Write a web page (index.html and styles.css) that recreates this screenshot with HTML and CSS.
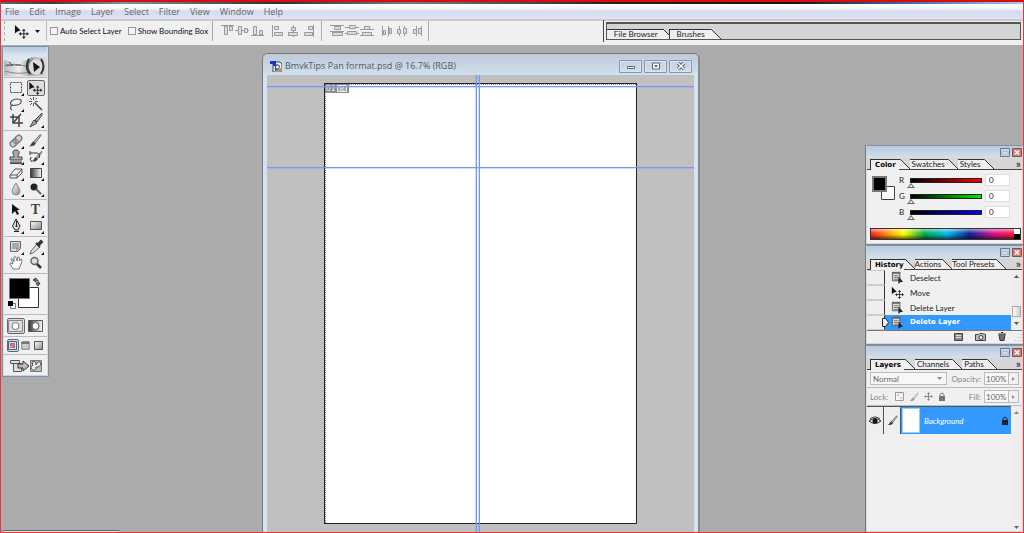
FILE: index.html
```html
<!DOCTYPE html>
<html lang="en">
<head>
<meta charset="utf-8">
<title>BmvkTips Pan format.psd</title>
<link rel="stylesheet" href="styles.css">
</head>
<body>
<svg class="sprite" aria-hidden="true">
  <defs>
    <linearGradient id="gray" x1="0" x2="1"><stop offset="0" stop-color="#333"/><stop offset="1" stop-color="#fff"/></linearGradient>
    <linearGradient id="soft" x1="0" y1="0" x2="1" y2="1"><stop offset="0" stop-color="#fff"/><stop offset="1" stop-color="#888"/></linearGradient>
    <symbol id="corner" viewBox="0 0 16 16"><path d="M16 13v3h-3z" fill="#111"/></symbol>
    <symbol id="move" viewBox="0 0 16 16"><path d="M1 1v9l2.500-2 3.500-1z" fill="#111"/><path d="M10.500 6.500v8M6.500 10.500h8" stroke="#222"/><path d="M10.500 5l2 2.500h-4zM10.500 16l2-2.500h-4zM5 10.500l2.500-2v4zM16 10.500l-2.500-2v4z" fill="#222"/></symbol>
    <symbol id="step" viewBox="0 0 14 14"><path d="M1.500 1.500h8v9h-8z" fill="#ddd" stroke="#555"/><path d="M1 1h9v2H1z" fill="#666"/><path d="M3 5h5M3 7h5M3 9h5" stroke="#777"/><path d="M8 6v8l2-2 3-.5z" fill="#222"/></symbol>
    <symbol id="brush" viewBox="0 0 16 16"><path d="M14 1L6 10l2 1.500L15 2z" fill="#bbb" stroke="#444" stroke-width=".8"/><path d="M6 9l3 2.500C7 15 4 14.500 1 14.500 4 13 4 10 6 9z" fill="#444"/></symbol>
    <symbol id="chip" viewBox="0 0 12 12"><path d="M1 1h10v10H1z" fill="#ccc" stroke="#666"/><path d="M1 1h10v3H1z" fill="#777"/></symbol>
    <symbol id="min" viewBox="0 0 10 9"><path d="M.5.5h9v8h-9z" fill="#c7d6e6" stroke="#67788d"/><path d="M2 4h6v2H2z" fill="#fff" stroke="#67788d" stroke-width=".5"/></symbol>
    <symbol id="cls" viewBox="0 0 10 9"><path d="M.5.5h9v8h-9z" fill="#cf8078" stroke="#874c4c"/><path d="M3 2.500l4 4M7 2.500l-4 4" stroke="#fff" stroke-width="1.500"/></symbol>
    <symbol id="lock" viewBox="0 0 8 9"><path d="M2 4V2.500q2-3 4 0V4" fill="none" stroke="currentColor"/><path d="M1 4h6v5H1z" fill="currentColor"/></symbol>
    <symbol id="slant" viewBox="0 0 11 10"><path d="M0 0h1l10 10H0z" fill="#efefef"/><path d="M0 .5h1.500L11 10" fill="none" stroke="#333"/></symbol>
  </defs>
</svg>
<div class="app">
  <div class="strip"></div>
  <nav class="menubar">
    <button>File</button><button>Edit</button><button>Image</button><button>Layer</button><button>Select</button><button>Filter</button><button>View</button><button>Window</button><button>Help</button>
  </nav>
  <header class="options">
    <span class="grip"></span>
    <button class="current-tool" aria-label="Move tool"><svg width="15" height="15"><use href="#move"/></svg><svg width="5" height="3" viewBox="0 0 5 3"><path d="M0 0h5L2.500 3z" fill="#111"/></svg></button>
    <div class="checks">
      <label><input type="checkbox">Auto Select Layer</label>
      <label><input type="checkbox">Show Bounding Box</label>
    </div>
    <div class="aligns">
      <button aria-label="Align vertical"><svg width="43" height="12" viewBox="0 0 43 12"><g fill="#ddd" stroke="#9a9a9a"><path d="M0 .5h13M14 5.500h14M30 10.500h13"/><path d="M3.500 1.500h3v8h-3zM8.500 1.500h3v4h-3zM17.500 1.500h3v8h-3zM23.500 3.500h3v4h-3zM32.500 1.500h3v8h-3zM38.500 5.500h3v4h-3z"/></g></svg></button>
      <button aria-label="Align horizontal"><svg width="43" height="12" viewBox="0 0 43 12"><g fill="#ddd" stroke="#9a9a9a"><path d="M.5 0v12M21.500 0v12M41.500 0v12"/><path d="M2.500 1.500h4v3h-4zM2.500 7.500h8v3h-8zM19.500 2.500h4v3h-4zM16.500 7.500h9v3h-9zM36.500 1.500h4v3h-4zM32.500 7.500h8v3h-8z"/></g></svg></button>
    </div>
    <div class="aligns">
      <button aria-label="Distribute vertical"><svg width="44" height="12" viewBox="0 0 44 12"><g fill="#ddd" stroke="#9a9a9a"><path d="M0 .5h14M0 6.500h14M15 2.500h14M15 8.500h14M30 4.500h14M30 10.500h14"/><path d="M4.500 1.500h6v3h-6zM2.500 7.500h10v3h-10zM19.500.5h6v3h-6zM17.500 6.500h9v3h-9zM34.500 1.500h5v3h-5zM32.500 7.500h9v3h-9z"/></g></svg></button>
      <button aria-label="Distribute horizontal"><svg width="40" height="12" viewBox="0 0 40 12"><g fill="#ddd" stroke="#9a9a9a"><path d="M.5 1v10M6.500 1v10M17.500 1v10M22.500 1v10M34.500 1v10M39.500 1v10"/><path d="M1.500 5.500h2v4h-2zM7.500 3.500h2v5h-2zM15.500 4.500h3v4h-3zM21.500 3.500h3v5h-3zM31.500 4.500h3v4h-3zM36.500 3.500h3v5h-3z"/></g></svg></button>
    </div>
    <div class="well">
      <div class="well-tabs">
        <button class="tab">File Browser</button><svg class="cap" width="6" height="10" viewBox="0 0 6 10"><path d="M0 0v10h6V6z" fill="#efefef"/><path d="M0 0l6 6" stroke="#333"/></svg><button class="tab">Brushes</button><svg class="cap" width="11" height="10"><use href="#slant"/></svg>
      </div>
    </div>
  </header>

  <main class="desktop">
    <section class="doc">
      <header class="doc-title">
        <svg width="12" height="12" viewBox="0 0 12 12"><path d="M3 2h7l2 2v8H3z" fill="#eee" stroke="#445"/><path d="M0 1h6v5H3V4H0z" fill="#1833c8"/><path d="M5 5q3-2 5 1l-1 4-4 1z" fill="#315f75"/><circle cx="7.500" cy="7" r="1.500" fill="#eee"/><path d="M8 9l3-1v3H8z" fill="#d88747"/></svg>
        <h1>BmvkTips Pan format.psd @ 16.7% (RGB)</h1>
        <div class="doc-buttons">
          <button aria-label="Minimize"><svg width="10" height="8" viewBox="0 0 10 8"><path d="M1.500 4.500h7v2h-7z" fill="#fff" stroke="#556477"/></svg></button>
          <button aria-label="Maximize"><svg width="10" height="8" viewBox="0 0 10 8"><path d="M1.500 1h7v6h-7zM4 3.500h2v1H4z" fill="#fff" stroke="#556477"/></svg></button>
          <button aria-label="Close"><svg width="10" height="8" viewBox="0 0 10 8"><path d="M2 1l6 6M8 1L2 7" stroke="#556477" stroke-width="3.500"/><path d="M2 1l6 6M8 1L2 7" stroke="#fff" stroke-width="1.500"/></svg></button>
        </div>
      </header>
      <div class="canvas">
        <div class="page"><div class="slice"><span>01</span><svg width="10" height="7" viewBox="0 0 10 7"><path d="M.5.5h9v6h-9z" fill="#aaa" stroke="#eee"/><path d="M3 5l4-3M3 2h1M6 5h1" stroke="#fff"/></svg></div></div>
        <i class="guide v one"></i><i class="guide v two"></i><i class="guide h one"></i><i class="guide h two"></i>
      </div>
    </section>

    <aside class="toolbox">
      <div class="brand"><svg width="43" height="19" viewBox="0 0 43 19"><defs><linearGradient id="eyebg"><stop offset="0" stop-color="#bbb"/><stop offset=".35" stop-color="#eee"/><stop offset=".6" stop-color="#aaa"/><stop offset="1" stop-color="#ddd"/></linearGradient></defs><path d="M0 3q12 3 22 0L27 0h16v19H0z" fill="url(#eyebg)"/><path d="M0 9q12-3 23 0M1 14q12 4 25 1" fill="none" stroke="#888"/><path d="M2 8h8M5 5l4 4M11 8h6" stroke="#555"/><ellipse cx="31" cy="10" rx="9" ry="8" fill="#777"/><ellipse cx="32" cy="10" rx="7" ry="8" fill="#ddd"/><path d="M25 2q-5 8 1 15M37 2q5 7 0 15" fill="none" stroke="#333" stroke-width="2"/><path d="M29 5l7 5-6 5z" fill="#151515"/></svg></div>
      <div class="tools">
        <button aria-label="Marquee"><svg width="16" height="16"><path d="M2.500 2.500h11v10h-11z" fill="none" stroke="#444" stroke-dasharray="2 1"/><use href="#corner"/></svg></button>
        <button class="on" aria-label="Move"><svg width="15" height="14" viewBox="0 0 16 16"><use href="#move"/></svg></button>
        <button aria-label="Lasso"><svg width="16" height="16"><path d="M3.500 10Q1 6 5 4T13 4q1 4-4 5T4 9q-3 3 0 5" fill="none" stroke="#555" stroke-width="1.200"/><use href="#corner"/></svg></button>
        <button aria-label="Magic wand"><svg width="16" height="16"><path d="M6.500 6.500L14 14" stroke="#444" stroke-width="1.500"/><path d="M5.500 1v3M5.500 7v3M1 5.500h3M7 5.500h3M2 2l2 2M9 2L7.500 3.500M2 9l2-2" stroke="#555"/></svg></button>
        <button aria-label="Crop"><svg width="16" height="16"><path d="M5 2v9h10M2 5h9v10M5 11l8-9" fill="none" stroke="#444" stroke-width="1.500"/></svg></button>
        <button aria-label="Slice"><svg width="16" height="16"><path d="M14 1L7 8l2 2 5-7zM6 8l3 3-7 4z" fill="#aaa" stroke="#444"/><use href="#corner"/></svg></button>
      </div>
      <div class="tools">
        <button aria-label="Healing brush"><svg width="16" height="16"><g transform="rotate(-45 8 8)"><rect x="1" y="5" width="14" height="6" rx="3" fill="#ccc" stroke="#666"/><path d="M5 5h5v6H5z" fill="#888"/><path d="M6 7h1M8 9h1" stroke="#fff"/></g><use href="#corner"/></svg></button>
        <button aria-label="Brush"><svg width="16" height="16"><use href="#brush" width="14" height="15"/><use href="#corner"/></svg></button>
        <button aria-label="Clone stamp"><svg width="16" height="16"><path d="M6 7q-3-6 2-6t2 6v1h4v3H2V8h4zM2.500 13h11v1.500h-11z" fill="#aaa" stroke="#444"/><use href="#corner"/></svg></button>
        <button aria-label="History brush"><svg width="16" height="16"><use href="#brush" x="3" y="1" width="12" height="13"/><path d="M2 4h7q4 1 2 5M2 2v4M3 8q-2 3 1 5" fill="none" stroke="#333"/><use href="#corner"/></svg></button>
        <button aria-label="Eraser"><svg width="16" height="16"><path d="M2 10l5-6h7l-5 6zM2 10v3h7v-3M9 13l5-5V4" fill="#eee" stroke="#555"/><use href="#corner"/></svg></button>
        <button aria-label="Gradient"><svg width="16" height="16"><path d="M2.500 3.500h11v9h-11z" fill="url(#gray)" stroke="#444"/><use href="#corner"/></svg></button>
        <button aria-label="Blur"><svg width="16" height="16"><path d="M8 2q-4 6-4 8a4 4 0 0 0 8 0q0-2-4-8z" fill="url(#soft)" stroke="#888"/><use href="#corner"/></svg></button>
        <button aria-label="Dodge"><svg width="16" height="16"><circle cx="6" cy="6" r="3.500" fill="#222"/><path d="M8 8l5 5" stroke="#666" stroke-width="2"/><use href="#corner"/></svg></button>
      </div>
      <div class="tools">
        <button aria-label="Path selection"><svg width="16" height="16"><path d="M4 2v10l3-3 2 4 2-1-2-4h3z" fill="#111"/><use href="#corner"/></svg></button>
        <button class="type" aria-label="Type">T<svg width="16" height="16"><use href="#corner"/></svg></button>
        <button aria-label="Pen"><svg width="16" height="16"><path d="M8 1L4.500 8 7 12h3l2-4zM6 13.500h5M8.500 3v5" fill="#ddd" stroke="#222"/><circle cx="8.500" cy="8" r="1" fill="#222"/><use href="#corner"/></svg></button>
        <button aria-label="Rectangle"><svg width="16" height="16"><path d="M2.500 3.500h11v8h-11z" fill="url(#soft)" stroke="#555"/><use href="#corner"/></svg></button>
      </div>
      <div class="tools">
        <button aria-label="Notes"><svg width="16" height="16"><path d="M2.500 2.500h10v7l-3 3h-7z" fill="#ddd" stroke="#666"/><path d="M4 5h7M4 7h7M4 9h5M9 13V9h4" fill="none" stroke="#777"/><use href="#corner"/></svg></button>
        <button aria-label="Eyedropper"><svg width="16" height="16"><path d="M9 5l3 3-7 6-3 1 1-3z" fill="#ddd" stroke="#666"/><path d="M8 4l4 4M10 5l3-3 1 1-3 3" stroke="#333" stroke-width="2"/><use href="#corner"/></svg></button>
        <button aria-label="Hand"><svg width="16" height="16"><path d="M5 14L2 9q0-2 3 0L3 4q1-2 3 3L6 2q2-2 3 4l1-4q2-1 1.500 4L13 4q2 0 0 5l-2 5z" fill="#fff" stroke="#777"/></svg></button>
        <button aria-label="Zoom"><svg width="16" height="16"><circle cx="6.500" cy="6" r="3.500" fill="#ddd" stroke="#666" stroke-width="1.500"/><path d="M9 9l4 4" stroke="#333" stroke-width="2.500"/></svg></button>
      </div>
      <div class="swatch-box"><svg width="35" height="34" viewBox="0 0 35 34"><path d="M10.500 11.500h20v20h-20z" fill="#fff" stroke="#333"/><path d="M1.500 2.500h20v20h-20z" fill="#000" stroke="#777"/><path d="M26 4h4v5M25 4l3-2v4zM30 10l-2-3h4z" fill="none" stroke="#333"/><path d="M2.500 27.500h5v5h-5z" fill="#fff" stroke="#777"/><path d="M0 25h5v5H0z" fill="#000"/></svg></div>
      <div class="tools modes">
        <button class="on" aria-label="Standard mode"><svg width="15" height="12" viewBox="0 0 15 12"><path d="M.5.5h14v11H.5z" fill="#ddd" stroke="#888"/><circle cx="7.500" cy="6" r="3.500" fill="#fff" stroke="#777"/></svg></button>
        <button aria-label="Quick mask"><svg width="15" height="12" viewBox="0 0 15 12"><path d="M.5.5h14v11H.5z" fill="url(#gray)" stroke="#555"/><circle cx="7.500" cy="6" r="3.500" fill="#fff" stroke="#555"/></svg></button>
      </div>
      <div class="screens">
        <button class="on" aria-label="Standard screen"><svg width="9" height="9" viewBox="0 0 9 9"><path d="M.5.5h8v8h-8z" fill="#dde" stroke="#2b65a6"/><path d="M2 2h5v5H2z" fill="#d3674d"/><path d="M2 6l4-3v1L3 7z" fill="#8bb4e0"/></svg></button>
        <button aria-label="Full screen with menu"><svg width="9" height="9"><use href="#chip"/></svg></button>
        <button aria-label="Full screen"><svg width="9" height="9" viewBox="0 0 9 9"><path d="M.5.5h8v8h-8z" fill="url(#soft)" stroke="#555"/></svg></button>
      </div>
      <button class="jump" aria-label="Jump to ImageReady"><svg width="34" height="14" viewBox="0 0 34 14"><path d="M1.500 1.500h9v3h-9zM4.500 4.500h8v8h-8z" fill="#ddd" stroke="#555"/><path d="M9 5h5V2l6 5-6 5V9H9z" fill="#bbb" stroke="#333"/><path d="M21.500 1.500h11v11h-11z" fill="#bbb" stroke="#777"/><path d="M23 3q4-2 4 3 2-5 5-2-1 5-5 4 0 4-3 3-4-2 0-5z" fill="#eee" stroke="#555"/></svg></button>
    </aside>

    <aside class="palettes">
      <section class="palette">
        <div class="bar"><button aria-label="Minimize"><svg width="10" height="9"><use href="#min"/></svg></button><button aria-label="Close"><svg width="10" height="9"><use href="#cls"/></svg></button></div>
        <div class="tabs"><button class="tab active">Color</button><svg class="cap" width="11" height="10"><use href="#slant"/></svg><button class="tab">Swatches</button><svg class="cap" width="11" height="10"><use href="#slant"/></svg><button class="tab">Styles</button><svg class="cap" width="11" height="10"><use href="#slant"/></svg><button class="more" aria-label="Palette menu">»</button></div>
        <div class="color-body">
          <svg class="fgbg" width="24" height="25" viewBox="0 0 24 25"><path d="M9.500 10.500h13v13h-13z" fill="#fff" stroke="#444"/><path d="M1 1h13v14H1z" fill="#000" stroke="#777" stroke-width="2"/></svg>
          <div class="channels">
            <label for="r">R</label><input id="r" class="red" type="range" min="0" max="255" value="0"><input type="text" value="0" aria-label="Red value">
            <label for="g">G</label><input id="g" class="green" type="range" min="0" max="255" value="0"><input type="text" value="0" aria-label="Green value">
            <label for="b">B</label><input id="b" class="blue" type="range" min="0" max="255" value="0"><input type="text" value="0" aria-label="Blue value">
          </div>
        </div>
        <div class="spectrum"><i></i></div>
      </section>

      <section class="palette">
        <div class="bar"><button aria-label="Minimize"><svg width="10" height="9"><use href="#min"/></svg></button><button aria-label="Close"><svg width="10" height="9"><use href="#cls"/></svg></button></div>
        <div class="tabs history-tabs"><button class="tab active">History</button><svg class="cap" width="11" height="10"><use href="#slant"/></svg><button class="tab">Actions</button><svg class="cap" width="11" height="10"><use href="#slant"/></svg><button class="tab">Tool Presets</button><svg class="cap" width="11" height="10"><use href="#slant"/></svg><button class="more" aria-label="Palette menu">»</button></div>
        <div class="history-body">
          <ul class="history">
            <li><i></i><svg width="13" height="13"><use href="#step"/></svg>Deselect</li>
            <li><i></i><svg width="13" height="13"><use href="#move"/></svg>Move</li>
            <li><i></i><svg width="13" height="13"><use href="#step"/></svg>Delete Layer</li>
            <li class="selected"><i></i><svg width="13" height="13"><use href="#step"/></svg>Delete Layer<svg class="pointer" width="7" height="9" viewBox="0 0 7 9"><path d="M.5.5h3l3 4-3 4h-3z" fill="#fff" stroke="#222"/></svg></li>
          </ul>
          <div class="scroll"><svg width="5" height="3" viewBox="0 0 5 3"><path d="M2.500 0L5 3H0z" fill="#555"/></svg><b></b><svg width="5" height="3" viewBox="0 0 5 3"><path d="M0 0h5L2.500 3z" fill="#555"/></svg></div>
        </div>
        <div class="history-foot">
          <button aria-label="New document"><svg width="9" height="8" viewBox="0 0 9 8"><path d="M.5.5h8v7h-8z" fill="#888" stroke="#444"/><path d="M2 2.500h5M2 4.500h5" stroke="#ddd"/></svg></button>
          <button aria-label="New snapshot"><svg width="11" height="8" viewBox="0 0 11 8"><path d="M.5 1.500h3l1-1h3l3 1v6H.5z" fill="#bbb" stroke="#444"/><circle cx="6" cy="4.500" r="2" fill="#fff" stroke="#333"/></svg></button>
          <button aria-label="Delete"><svg width="8" height="9" viewBox="0 0 8 9"><path d="M0 2h8M3 .5h2M1 3l1 5.500h4L7 3zM3 4v4M5 4v4" fill="#aaa" stroke="#333"/></svg></button>
          <svg width="9" height="9" viewBox="0 0 9 9"><path d="M8 2v1M8 5v1M5 5v1M8 8v1M5 8v1M2 8v1" stroke="#aaa"/></svg>
        </div>
      </section>

      <section class="palette layers">
        <div class="bar"><button aria-label="Minimize"><svg width="10" height="9"><use href="#min"/></svg></button><button aria-label="Close"><svg width="10" height="9"><use href="#cls"/></svg></button></div>
        <div class="tabs"><button class="tab active">Layers</button><svg class="cap" width="11" height="10"><use href="#slant"/></svg><button class="tab">Channels</button><svg class="cap" width="11" height="10"><use href="#slant"/></svg><button class="tab">Paths</button><svg class="cap" width="11" height="10"><use href="#slant"/></svg><button class="more" aria-label="Palette menu">»</button></div>
        <div class="layer-row">
          <div class="select"><select aria-label="Blend mode"><option>Normal</option></select><svg width="5" height="3" viewBox="0 0 5 3"><path d="M0 0h5L2.500 3z" fill="#888"/></svg></div>
          <label for="op">Opacity:</label><div class="spin"><input id="op" type="text" value="100%"><button aria-label="Opacity slider"><svg width="3" height="4" viewBox="0 0 3 4"><path d="M0 0l3 2-3 2z" fill="#999"/></svg></button></div>
        </div>
        <div class="layer-row">
          <span>Lock:</span>
          <div class="locks">
            <button aria-label="Lock transparency"><svg width="9" height="9" viewBox="0 0 9 9"><path d="M.5.5h8v8h-8z" fill="#f5f5f5" stroke="#999"/><path d="M2 2h2v2H2zM5 5h2v2H5zM5 1h2v1H5z" fill="#ccc"/></svg></button>
            <button class="dim" aria-label="Lock pixels"><svg width="10" height="10"><use href="#brush"/></svg></button>
            <button aria-label="Lock position"><svg width="9" height="9" viewBox="0 0 9 9"><path d="M4.500 1v7M1 4.500h7" stroke="#888"/><path d="M4.500 0L6 2H3zM4.500 9L6 7H3zM0 4.500L2 3v3zM9 4.500L7 3v3z" fill="#888"/></svg></button>
            <button class="gray" aria-label="Lock all"><svg width="8" height="9"><use href="#lock"/></svg></button>
          </div>
          <label for="fill">Fill:</label><div class="spin"><input id="fill" type="text" value="100%"><button aria-label="Fill slider"><svg width="3" height="4" viewBox="0 0 3 4"><path d="M0 0l3 2-3 2z" fill="#999"/></svg></button></div>
        </div>
        <div class="layer-list">
          <div class="layer">
            <button aria-label="Visibility"><svg width="12" height="10" viewBox="0 0 12 10"><path d="M0 5q6-5 12 0-6 5-12 0z" fill="#ddd" stroke="#333"/><circle cx="6" cy="5" r="2.500" fill="#111"/><path d="M1 3q5-4 10 0" fill="none" stroke="#333"/></svg></button>
            <button aria-label="Paint layer"><svg width="11" height="11"><use href="#brush"/></svg></button>
            <span class="thumb"></span><em>Background</em><svg class="lock" width="8" height="9"><use href="#lock"/></svg>
          </div>
          <div class="scroll tall"><svg width="5" height="3" viewBox="0 0 5 3"><path d="M2.500 0L5 3H0z" fill="#888"/></svg><svg width="5" height="3" viewBox="0 0 5 3"><path d="M0 0h5L2.500 3z" fill="#666"/></svg></div>
        </div>
      </section>
    </aside>
    <div class="docked"></div>
  </main>
</div>
</body>
</html>
```
FILE: styles.css
```css
* { box-sizing: border-box; }
body { margin: 0; font: 8px/10px Lato, "Liberation Sans", sans-serif; color: #222; }
button, input, select { font: inherit; color: inherit; margin: 0; padding: 0; border: 0; background: none; border-radius: 0; }
svg { display: block; flex: none; }
.sprite { position: absolute; width: 0; height: 0; }

.app { height: 100vh; display: flex; flex-direction: column; border: 1px solid #f03333; border-top: 2px solid #d80d10; overflow: hidden; background: #ababab; }
.strip { height: 2px; background: linear-gradient(90deg, #526b80, #333d48 5%, #7795a8 12%, #24313b 27%, #668096 40%, #222 60%, #111 77%, #3d79b8 90%, #a5c8e8); }
.menubar { display: flex; gap: 10px; height: 15px; padding: 0 4px; background: linear-gradient(#fff, #f3f6fc 30%, #d6dcf0 50%, #dfe5f6); font: 9px/15px "Open Sans", "Liberation Sans", sans-serif; color: #666; }
.options { display: flex; align-items: center; height: 26px; padding: 0 2px 4px 0; background: #f0f0f0; border-top: 2px solid #c9c9c9; }
.grip { height: 20px; margin-left: 3px; border-left: 1px dashed #aaa; }
.current-tool { display: flex; align-items: center; gap: 6px; height: 20px; padding: 0 6px 0 9px; border-right: 1px solid #bbb; }
.checks { display: flex; gap: 6px; height: 20px; padding: 0 4px 0 3px; border-right: 1px solid #aaa; }
.checks label { display: flex; align-items: center; gap: 2px; white-space: nowrap; }
.checks input { appearance: none; width: 8px; height: 8px; border: 1px solid #999; background: #f3f3f3; }
.checks label, .well { color: #111; }
.aligns { display: flex; align-items: center; gap: 8px; height: 20px; padding: 0 6px 0 8px; border-right: 1px solid #aaa; }
.well { flex: none; width: 41%; height: 22px; margin-left: auto; padding: 2px 0 2px 2px; border-left: 1px solid #444; }
.well-tabs { display: flex; align-items: flex-end; height: 18px; border: 1px solid #555; border-top-width: 2px; background: #d4d4d4; }
.tab { flex: none; height: 10px; padding: 0 3px 0 4px; line-height: 9px; border-top: 1px solid #333; border-left: 1px solid #333; background: #efefef; color: #222; white-space: nowrap; }
.well .tab { padding: 0 5px 0 7px; }
.well .tab:first-child { border-left: 0; }

.desktop { flex: 1; position: relative; overflow: hidden; }

/* document window */
.doc { position: absolute; left: 261px; top: 8px; bottom: 0; width: 438px; display: flex; flex-direction: column; padding: 0 4px; background: #d5e3f0; border: 1px solid #777; border-right: 2px solid #888; border-bottom: 0; border-radius: 6px 6px 0 0; }
.doc-title { display: flex; align-items: center; flex: none; gap: 3px; height: 21px; margin: 0 -4px; padding: 3px 6px 0 7px; background: linear-gradient(#becbd8, #d2dfec); border-radius: 5px 5px 0 0; }
.doc-title h1 { margin: 0; font: 9px/16px "Open Sans", "Liberation Sans", sans-serif; color: #4d5966; white-space: nowrap; }
.doc-buttons { display: flex; gap: 2px; margin-left: auto; }
.doc-buttons button { width: 23px; height: 13px; display: grid; place-items: center; border: 1px solid #8595ab; box-shadow: inset 0 0 0 1px #dce6f0; border-radius: 1px; }
.canvas { position: relative; flex: 1; background: #c0c0c0; overflow: hidden; }
.page { position: absolute; left: 57px; top: 8px; width: 313px; height: 441px; background: #fff; border: 1px solid #222; }
.page::before { content: ""; position: absolute; inset: 0; border: dotted #6c86c0; border-width: 1px 0 0 1px; }
.slice { position: relative; display: flex; gap: 2px; align-items: center; width: 24px; height: 9px; background: #8c8c8c; color: #fff; padding: 0 1px; line-height: 9px; }
.guide { position: absolute; background: #729bef; }
.guide.v { width: 1px; top: 0; bottom: 0; box-shadow: -1px 0 #729bef55; }
.guide.h { height: 1px; left: 0; right: 0; box-shadow: 0 1px #729bef55; }
.guide.v.one { left: 209px; } .guide.v.two { left: 212px; }
.guide.h.one { top: 11px; } .guide.h.two { top: 92px; }

/* toolbox */
.toolbox { position: absolute; left: 1px; top: 1px; width: 47px; padding: 0 1px; background: #f0f0f0; border: 1px solid #8191a3; box-shadow: inset 1px 0 #d3dfeb, inset -1px 0 #d3dfeb, inset 0 -1px #c5d3e2; }
.brand { height: 30px; padding-top: 10px; background: linear-gradient(#b4c8dc, #dce7f2 30%); overflow: hidden; }
.tools { display: grid; grid-template-columns: 18px 18px; grid-auto-rows: 16px; gap: 0 2px; justify-content: center; padding: 2px 0; border-top: 1px solid #bbb; }
.tools button { display: grid; place-items: center; }
.tools .on, .screens .on { border: 1px solid #666; border-radius: 2px; background: #ddd; }
.type { position: relative; font: bold 14px/16px "Liberation Serif", serif; color: #444; }
.type svg { position: absolute; right: 1px; bottom: 0; }
.swatch-box { height: 41px; padding: 2px 0 0 4px; border-top: 1px solid #bbb; }
.modes { padding: 3px 0 2px; }
.screens { display: flex; justify-content: center; gap: 1px; height: 18px; padding: 2px 0; border-top: 1px solid #bbb; }
.screens button { width: 12px; display: grid; place-items: center; }
.jump { display: grid; place-items: center; width: 100%; height: 22px; border-top: 1px solid #bbb; }

/* palettes */
.palettes { position: absolute; right: 0; top: 100px; bottom: 0; width: 158px; display: flex; flex-direction: column; gap: 1px; border-left: 1px solid #777; background: #888; }
.palette { flex: none; height: 99px; background: #f0f0f0; border: 1px solid #cbd8e6; border-top-color: #8191a3; }
.bar { display: flex; align-items: center; justify-content: flex-end; gap: 2px; height: 12px; background: linear-gradient(#b8cadc, #d3dfec); }
.tabs { display: flex; align-items: flex-end; height: 12px; padding-left: 3px; background: #d6d6d6; border-bottom: 1px solid #444; }
.tabs .active { font: bold 7px/9px "DejaVu Sans", sans-serif; color: #000; height: 11px; margin-bottom: -1px; }
.tabs .tab:not(.active) { border-left: 0; padding: 0 2px; }
.well .tab + .cap + .tab { border-left: 1px solid #333; }
.history-tabs .active { padding: 0 0 0 4px; }
.history-tabs .tab:not(.active) { padding: 0; }
.more { margin-left: auto; padding-right: 1px; font-size: 12px; }
.color-body { display: flex; gap: 3px; height: 58px; padding: 6px 12px 0 5px; }
.channels { flex: 1; display: grid; grid-template-columns: 8px 1fr 25px; grid-auto-rows: 16px; column-gap: 3px; margin-top: -2px; }
.channels label { line-height: 12px; }
.channels input[type=text] { width: 100%; height: 12px; padding-left: 3px; background: #fff; border: 1px solid #ddd; }
.channels input[type=range] { appearance: none; width: 100%; height: 13px; }
.channels input::-webkit-slider-runnable-track { height: 5px; border: 1px solid #222; background: linear-gradient(90deg, #000, var(--c)); }
.channels input::-webkit-slider-thumb { appearance: none; width: 8px; height: 5px; margin: 4px 0 0 -4px; background: #666; clip-path: polygon(50% 0, 100% 100%, 0 100%, 25% 80%, 75% 80%, 50% 30%, 25% 80%, 0 100%); }
.red { --c: #f00; } .green { --c: #0e0; } .blue { --c: #00f; }
.spectrum { display: flex; justify-content: flex-end; height: 12px; margin: 0 1px 0 3px; border: 1px solid #333; background: linear-gradient(#fff8, #fff0 45%, #0000 55%, #0009), linear-gradient(90deg, #f22, #ff0 22%, #0a4 36%, #00b8f0 51%, #129 66%, #e0108c 83%, #f22); }
.spectrum i { width: 6px; background: linear-gradient(#fff 50%, #000 50%); }

.history-body { display: flex; height: 60px; }
.history { flex: 1; margin: 0; padding: 0; list-style: none; }
.history li { display: flex; align-items: center; gap: 6px; height: 15px; position: relative; color: #222; }
.history i { width: 18px; height: 15px; border: 1px solid #ccc; border-left-color: #eee; border-right-color: #333; background: #eee; }
.history .selected { background: #3399ff; color: #fff; font: bold 7px/9px "DejaVu Sans", sans-serif; }
.pointer { position: absolute; left: 15px; top: 3px; }
.scroll { display: flex; flex-direction: column; justify-content: space-between; align-items: center; width: 11px; padding: 5px 0; background: #eee; }
.scroll b { width: 9px; height: 11px; margin: auto 0 5px; border: 1px solid #aaa; background: linear-gradient(90deg, #fff, #ccc); }
.history-foot { display: flex; align-items: center; justify-content: flex-end; gap: 12px; height: 12px; border-top: 1px solid #777; }
.history-foot button { min-width: 9px; }
.history-foot > svg { margin-left: -6px; }

.layers { flex: 1; height: auto; min-height: 100px; display: flex; flex-direction: column; }
.layers > * { flex: none; }
.layer-row { display: flex; align-items: center; gap: 3px; height: 18px; padding: 0 3px; color: #888; border-bottom: 1px solid #bbb; }
.layer-row > label { margin-left: auto; }
.select { display: flex; align-items: center; width: 77px; height: 13px; padding-right: 4px; border: 1px solid #bbb; background: #f7f7f7; }
.select select { appearance: none; flex: 1; padding-left: 2px; color: #666; }
.spin { display: flex; width: 35px; height: 13px; border: 1px solid #bbb; }
.spin input { width: 24px; padding-left: 1px; color: #666; background: #f7f7f7; border-right: 1px solid #bbb; }
.spin button { flex: 1; display: grid; place-items: center; }
.locks { display: flex; align-items: center; gap: 5px; margin-left: 4px; }
.dim { opacity: .5; } .gray { color: #777; }
.layer-list { flex: 1 1 0; display: flex; min-height: 0; }
.layer { flex: 1; display: flex; align-items: center; height: 28px; background: #3399ff; border-top: 1px solid #555; }
.layer button { width: 17px; height: 27px; display: grid; place-items: center; background: #eee; border-right: 1px solid #555; }
.thumb { width: 18px; height: 25px; margin: 0 4px 0 1px; background: #fff; border: 1px solid #9cf; }
.layer em { color: #fff; }
.layer .lock { margin: 0 2px 0 auto; color: #223; }
.tall { align-self: stretch; padding-bottom: 2px; }

.docked { position: absolute; left: 1px; bottom: 0; width: 118px; height: 2px; background: #d5e3f0; border-top: 1px solid #666; border-radius: 3px 3px 0 0; }
```
